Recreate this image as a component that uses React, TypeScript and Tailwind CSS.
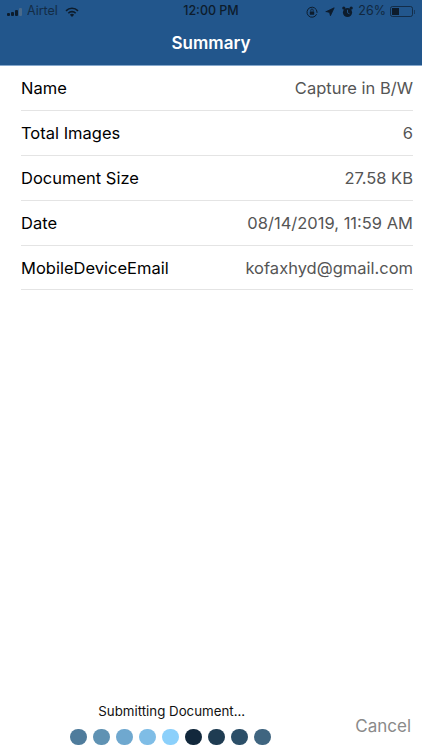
import { Navigation } from 'lucide-react';

const rows = [
  { label: 'Name', value: 'Capture in B/W' },
  { label: 'Total Images', value: '6' },
  { label: 'Document Size', value: '27.58 KB' },
  { label: 'Date', value: '08/14/2019, 11:59 AM' },
  { label: 'MobileDeviceEmail', value: 'kofaxhyd@gmail.com' },
];

const dots = [
  'bg-[#4f7c9c]',
  'bg-[#5f92b3]',
  'bg-[#6fa8cf]',
  'bg-[#7fbde6]',
  'bg-[#8bd0fb]',
  'bg-[#12283c]',
  'bg-[#1f3c52]',
  'bg-[#2c4f68]',
  'bg-[#3f6580]',
];

function StatusBar() {
  return (
    <div className="relative flex h-[20px] items-center justify-between pl-[7px] pr-[7px] pt-[3px] text-[12.5px] text-[#0d1c2c]">
      <div className="flex items-center gap-[5px]">
        <div className="flex items-end gap-[1px]">
          <span className="h-[3px] w-[3px] rounded-[1px] bg-[#0d1c2c]" />
          <span className="h-[4px] w-[3px] rounded-[1px] bg-[#0d1c2c]" />
          <span className="h-[6px] w-[3px] rounded-[1px] bg-[#0d1c2c]" />
          <span className="h-[8px] w-[3px] rounded-[1px] bg-[#4a6a8a]" />
        </div>
        <span className="text-[#123] opacity-80">Airtel</span>
        <svg width="14" height="10" viewBox="0 0 15 11" className="ml-[2px]">
          <path d="M0.3 3.6a10 10 0 0 1 14.4 0l-1.2 1.3a8.3 8.3 0 0 0-12 0z" fill="#0d1c2c" />
          <path d="M2.8 6.2a6.5 6.5 0 0 1 9.4 0l-1.3 1.3a4.7 4.7 0 0 0-6.8 0z" fill="#0d1c2c" />
          <path d="M5.2 8.6a3 3 0 0 1 4.6 0l-2.3 2.3z" fill="#0d1c2c" />
        </svg>
      </div>
      <span className="absolute left-1/2 -translate-x-1/2 font-medium">12:00 PM</span>
      <div className="flex items-center">
        <svg width="12" height="12" viewBox="0 0 12 12" fill="none">
          <path d="M10.6 8.2A5 5 0 1 1 11 6v.8" stroke="#0d1c2c" strokeWidth="1" />
          <rect x="3.8" y="5.4" width="4.4" height="3.4" rx="0.5" fill="#0d1c2c" />
          <path d="M4.8 5.4V4.2a1.2 1.2 0 0 1 2.4 0v1.2" stroke="#0d1c2c" strokeWidth="0.8" />
        </svg>
        <Navigation className="ml-[7px] size-[10px] fill-[#0d1c2c] text-[#0d1c2c]" />
        <svg width="11" height="12" viewBox="0 0 11 12" className="ml-[7px]">
          <circle cx="5.5" cy="6.5" r="4.6" fill="#0d1c2c" />
          <circle cx="1.8" cy="2" r="1.6" fill="#0d1c2c" />
          <circle cx="9.2" cy="2" r="1.6" fill="#0d1c2c" />
          <path d="M5.5 3.8v3l2 1" stroke="#22568c" strokeWidth="0.9" fill="none" />
        </svg>
        <span className="ml-[5px] opacity-80">26%</span>
        <div className="ml-[4px] flex items-center">
          <div className="h-[11px] w-[23px] rounded-[2.5px] border border-[#0d1c2c]/70 p-[1px]">
            <div className="h-full w-[7px] bg-[#0d1c2c]" />
          </div>
          <span className="ml-[1px] h-[4px] w-[1px] bg-[#0d1c2c]/50" />
        </div>
      </div>
    </div>
  );
}

export default function App() {
  return (
    <div className="flex h-[750px] w-[422px] flex-col overflow-hidden bg-white font-['Inter',sans-serif]">
      <header className="h-[66px] border-b border-[#86a8cc] bg-[#22568c]">
        <StatusBar />
        <h1 className="mt-[3px] text-center text-[17px] leading-[40px] font-semibold text-white">Summary</h1>
      </header>

      <main className="flex-1 pl-[21px] pr-[9px]">
        {rows.map((row) => (
          <div key={row.label} className="flex h-[44.9px] items-center justify-between border-b border-[#e4e4e4] pt-[1px] text-[16.5px]">
            <span className="text-black">{row.label}</span>
            <span className="text-[#555555]">{row.value}</span>
          </div>
        ))}
      </main>

      <footer className="flex items-end justify-between pb-[5px] pl-[70px] pr-[11px]">
        <div className="flex flex-col items-center">
          <span className="mb-[10px] ml-[3px] text-[13.3px] leading-[16px] text-[#111111]">Submitting Document...</span>
          <div className="flex gap-[6.5px]">
            {dots.map((dot) => (
              <span key={dot} className={`size-[16.5px] rounded-full ${dot}`} />
            ))}
          </div>
        </div>
        <span className="mb-[7px] text-[17px] leading-[24px] text-[#8a8a8a]">Cancel</span>
      </footer>
    </div>
  );
}
